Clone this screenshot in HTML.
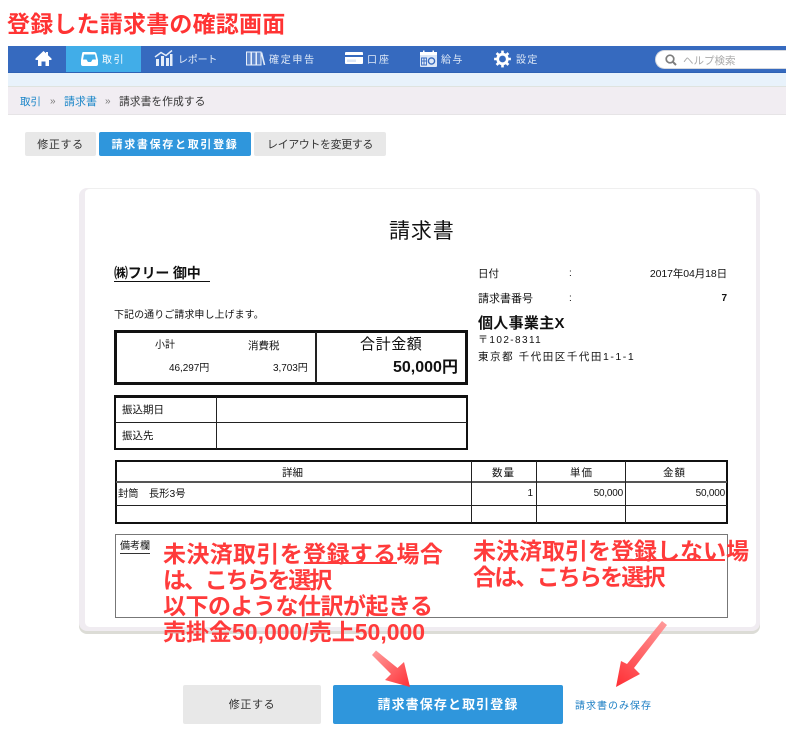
<!DOCTYPE html>
<html lang="ja"><head><meta charset="utf-8"><title>請求書</title>
<style>
html,body{margin:0;padding:0;background:#fff}
body{width:793px;height:748px;position:relative;overflow:hidden;font-family:"Liberation Sans","Noto Sans CJK JP",sans-serif;color:#222}
.a{position:absolute;white-space:nowrap}
.b{position:absolute;box-sizing:border-box}
.nav{color:#dfe9f7;font-size:10px;line-height:14px;letter-spacing:.6px}
.btn{position:absolute;border-radius:2px;text-align:center;box-sizing:border-box}
.red{color:#ff3b3b;font-weight:bold;font-size:23px;line-height:27px}
.k{color:#111}
</style></head><body>

<div class="a" style="left:7px;top:10px;font-size:23px;line-height:28px;font-weight:bold;color:#ff3333;letter-spacing:.2px">登録した請求書の確認画面</div>

<!-- nav -->
<div class="b" style="left:8px;top:46px;width:778px;height:27px;background:#366abf"></div>
<div class="b" style="left:66px;top:46px;width:75px;height:27px;background:#41ade8"></div>
<div class="b" style="left:8px;top:72px;width:778px;height:1px;background:#2f62b4"></div>
<div class="b" style="left:8px;top:73px;width:778px;height:14px;background:#e8f2fb"></div>
<div class="b" style="left:8px;top:86px;width:778px;height:1px;background:#dfe3df"></div>
<div class="b" style="left:8px;top:87px;width:778px;height:28px;background:#f1edf2;border-bottom:1px solid #e6e4e6"></div>

<svg class="a" style="left:0;top:40px" width="793" height="40" viewBox="0 40 793 40">
<!-- home -->
<path d="M43.500 51 L35.500 58.500 V60 H38 V66 H41.500 V61.500 H45.500 V66 H49 V60 H51.500 V58.500 L48 55.200 V52 H46 V53.300 Z" fill="#fff"/>
<!-- inbox -->
<path d="M83 52 H94 Q96 52 96.500 54 L98 60 V64 Q98 66 96 66 H83 Q81 66 81 64 V60 L82 54 Q82.300 52 83 52 Z" fill="#fff"/>
<path d="M84 54.500 H95 L96 59.500 H92.500 L91 62 H88 L86.500 59.500 H83 Z" fill="#41ade8"/>
<!-- report -->
<g fill="#e4edf9"><rect x="156" y="59" width="3" height="7"/><rect x="161" y="56" width="3" height="10"/><rect x="166" y="58" width="3" height="8"/><rect x="170" y="54" width="2.500" height="12"/></g>
<path d="M155 57 L161 52.500 L166 55.500 L172 50.500" fill="none" stroke="#e4edf9" stroke-width="1.500"/>
<!-- books -->
<g fill="#5f88cc" stroke="#e8f0fb" stroke-width="1"><rect x="246.500" y="52" width="4.500" height="13"/><rect x="251.500" y="52" width="4.500" height="13"/><rect x="256.500" y="52" width="4.500" height="13"/></g>
<path d="M261.500 52.500 L264.500 65" stroke="#e4edf9" stroke-width="1.600" fill="none"/>
<!-- card -->
<rect x="345" y="52" width="18" height="12" rx="1" fill="#fff"/>
<rect x="345" y="55" width="18" height="2" fill="#366abf"/><rect x="347" y="59.500" width="9" height="2.500" fill="#dbe6f6"/>
<!-- calendar -->
<rect x="420" y="52" width="17" height="15" rx="1" fill="#dce7f7"/>
<rect x="420" y="52" width="17" height="3" fill="#fff"/>
<rect x="423" y="50.500" width="1.500" height="3" fill="#fff"/><rect x="432.500" y="50.500" width="1.500" height="3" fill="#fff"/>
<path d="M421.500 58 h5 v7 h-5 z M421.500 61 h5 M424 58 v7" stroke="#366abf" fill="none" stroke-width=".9"/>
<circle cx="431.500" cy="61" r="3.100" fill="#dce7f7" stroke="#366abf" stroke-width="1.400"/>
<!-- gear -->
<g fill="#fff"><circle cx="502.500" cy="59" r="6.200"/>
<g stroke="#fff" stroke-width="2.600"><path d="M502.500 50.600 V67.400"/><path d="M494.100 59 H510.900"/><path d="M496.600 53.100 L508.400 64.900"/><path d="M508.400 53.100 L496.600 64.900"/></g></g>
<circle cx="502.500" cy="59" r="3.400" fill="#366abf"/>
</svg>

<div class="a nav" style="left:102px;top:54px;color:#fff;letter-spacing:1.600px">取引</div>
<div class="a nav" style="left:178px;top:54px;letter-spacing:-.2px">レポート</div>
<div class="a nav" style="left:269px;top:54px;letter-spacing:1.700px">確定申告</div>
<div class="a nav" style="left:367px;top:54px;letter-spacing:2px">口座</div>
<div class="a nav" style="left:441px;top:54px;letter-spacing:1.400px">給与</div>
<div class="a nav" style="left:516px;top:54px;letter-spacing:1.400px">設定</div>

<div class="b" style="left:655px;top:50px;width:131px;height:19px;background:#fff;border-radius:10px 0 0 10px;border:1px solid #d5d8de;border-right:0"></div>
<svg class="a" style="left:664px;top:53px" width="14" height="13"><circle cx="6" cy="6" r="3.800" fill="none" stroke="#7d7d7d" stroke-width="1.700"/><path d="M8.800 8.800 L12 12" stroke="#7d7d7d" stroke-width="2"/></svg>
<div class="a" style="left:683px;top:54px;font-size:10.500px;line-height:14px;color:#aaa">ヘルプ検索</div>

<!-- breadcrumb -->
<div class="a" style="left:20px;top:95px;font-size:10.500px;line-height:14px;color:#1c86c8">取引</div>
<div class="a" style="left:50px;top:95px;font-size:10px;line-height:14px;color:#777">»</div>
<div class="a" style="left:64px;top:95px;font-size:11px;line-height:14px;color:#1c86c8">請求書</div>
<div class="a" style="left:105px;top:95px;font-size:10px;line-height:14px;color:#777">»</div>
<div class="a" style="left:119px;top:95px;font-size:10.800px;line-height:14px;color:#333">請求書を作成する</div>

<!-- top buttons -->
<div class="btn" style="left:25px;top:132px;width:71px;height:24px;background:#e8e8e8;color:#333;font-size:11px;line-height:26px;letter-spacing:.6px">修正する</div>
<div class="btn" style="left:99px;top:132px;width:152px;height:24px;background:#2f96dc;color:#fff;font-size:11px;line-height:26px;font-weight:bold;letter-spacing:1.700px">請求書保存と取引登録</div>
<div class="btn" style="left:254px;top:132px;width:132px;height:24px;background:#e8e8e8;color:#333;font-size:11px;line-height:26px;letter-spacing:-.4px">レイアウトを変更する</div>

<!-- card -->
<div class="b" style="left:79px;top:188px;width:681px;height:443px;background:#f0ecf1;border-radius:8px;box-shadow:0 3px 0 #dcdcd6"></div>
<div class="b" style="left:85px;top:188px;width:671px;height:439px;background:#fff;border-top:1px solid #efefef;border-radius:5px"></div>

<div class="a k" style="left:389px;top:219px;font-size:21px;line-height:26px;letter-spacing:.9px">請求書</div>
<div class="a k" style="left:114px;top:265px;font-size:14px;line-height:16px;font-weight:bold;border-bottom:1px solid #111;width:96px;letter-spacing:-.2px">㈱フリー 御中</div>
<div class="a k" style="left:114px;top:309px;font-size:10px;line-height:14px;letter-spacing:.05px">下記の通りご請求申し上げます。</div>

<!-- right info -->
<div class="a k" style="left:478px;top:267px;font-size:10.500px;line-height:14px">日付</div>
<div class="a k" style="left:569px;top:267px;font-size:10px;line-height:14px">:</div>
<div class="a k" style="right:66px;top:267px;font-size:10.500px;line-height:14px;letter-spacing:-.1px">2017年04月18日</div>
<div class="a k" style="left:478px;top:292px;font-size:11px;line-height:14px">請求書番号</div>
<div class="a k" style="left:569px;top:292px;font-size:10px;line-height:14px">:</div>
<div class="a k" style="right:66px;top:292px;font-size:10px;line-height:14px;font-weight:bold">7</div>
<div class="a k" style="left:478px;top:314px;font-size:15px;line-height:19px;font-weight:bold;letter-spacing:.3px">個人事業主X</div>
<div class="a k" style="left:478px;top:334px;font-size:10px;line-height:14px;letter-spacing:1.400px">〒102-8311</div>
<div class="a k" style="left:478px;top:350px;font-size:10.500px;line-height:14px;letter-spacing:1.550px">東京都 千代田区千代田1-1-1</div>

<!-- summary -->
<div class="b" style="left:114px;top:330px;width:354px;height:55px;border:3px solid #111"></div>
<div class="b" style="left:315px;top:332px;width:2px;height:51px;background:#222"></div>
<div class="a k" style="left:155px;top:339px;font-size:10px;line-height:14px">小計</div>
<div class="a k" style="left:248px;top:339px;font-size:10.500px;line-height:14px">消費税</div>
<div class="a k" style="left:169px;top:362px;font-size:10px;line-height:14px;letter-spacing:-.05px">46,297円</div>
<div class="a k" style="left:273px;top:362px;font-size:10px;line-height:14px;letter-spacing:-.05px">3,703円</div>
<div class="a k" style="left:360px;top:335px;font-size:15px;line-height:19px;letter-spacing:.6px">合計金額</div>
<div class="a k" style="left:393px;top:358px;font-size:16px;line-height:20px;font-weight:bold;letter-spacing:0">50,000円</div>

<!-- transfer -->
<div class="b" style="left:114px;top:395px;width:354px;height:55px;border:2px solid #111;border-top-width:3px"></div>
<div class="b" style="left:216px;top:397px;width:1px;height:52px;background:#222"></div>
<div class="b" style="left:115px;top:422px;width:352px;height:1px;background:#222"></div>
<div class="a k" style="left:122px;top:403px;font-size:10.500px;line-height:14px">振込期日</div>
<div class="a k" style="left:122px;top:429px;font-size:10.500px;line-height:14px">振込先</div>

<!-- details -->
<div class="b" style="left:115px;top:460px;width:613px;height:64px;border:2px solid #111"></div>
<div class="b" style="left:116px;top:481px;width:611px;height:2px;background:#555"></div>
<div class="b" style="left:116px;top:505px;width:611px;height:1px;background:#222"></div>
<div class="b" style="left:471px;top:461px;width:1px;height:62px;background:#222"></div>
<div class="b" style="left:536px;top:461px;width:1px;height:62px;background:#222"></div>
<div class="b" style="left:625px;top:461px;width:1px;height:62px;background:#222"></div>
<div class="a k" style="left:282px;top:466px;font-size:10.500px;line-height:14px">詳細</div>
<div class="a k" style="left:492px;top:466px;font-size:10.500px;line-height:14px;letter-spacing:1px">数量</div>
<div class="a k" style="left:570px;top:466px;font-size:10.500px;line-height:14px;letter-spacing:1px">単価</div>
<div class="a k" style="left:663px;top:466px;font-size:10.500px;line-height:14px;letter-spacing:1px">金額</div>
<div class="a k" style="left:118px;top:488px;font-size:10.300px;line-height:14px">封筒　長形3号</div>
<div class="a k" style="right:260px;top:487px;font-size:10px;line-height:14px">1</div>
<div class="a k" style="right:170px;top:487px;font-size:10px;line-height:14px;letter-spacing:-.2px">50,000</div>
<div class="a k" style="right:68px;top:487px;font-size:10px;line-height:14px;letter-spacing:-.2px">50,000</div>

<!-- remarks -->
<div class="b" style="left:115px;top:534px;width:613px;height:84px;border:1px solid #777"></div>
<div class="a k" style="left:120px;top:541px;font-size:10px;line-height:12px;border-bottom:1px solid #333;letter-spacing:0">備考欄</div>

<!-- bottom buttons -->
<div class="btn" style="left:183px;top:685px;width:138px;height:39px;background:#e8e8e8;color:#333;font-size:11px;line-height:40px;letter-spacing:.6px">修正する</div>
<div class="btn" style="left:333px;top:685px;width:230px;height:39px;background:#2f96dc;color:#fff;font-size:13px;line-height:39px;font-weight:bold;letter-spacing:1.100px">請求書保存と取引登録</div>
<div class="a" style="left:575px;top:700px;font-size:10px;line-height:14px;color:#1c7fc4;letter-spacing:1px">請求書のみ保存</div>

<!-- red notes -->
<div class="a red" style="left:163px;top:541px;letter-spacing:.35px">未決済取引を登録する場合</div>
<div class="b" style="left:304px;top:562px;width:93px;height:2px;background:#ff3b3b"></div>
<div class="a red" style="left:163px;top:567px;letter-spacing:-2.100px">は、こちらを選択</div>
<div class="a red" style="left:163px;top:593px;letter-spacing:-.5px">以下のような仕訳が起きる</div>
<div class="a red" style="left:163px;top:619px">売掛金50,000/売上50,000</div>
<div class="a red" style="left:473px;top:538px">未決済取引を登録しない場</div>
<div class="b" style="left:613px;top:559px;width:112px;height:2px;background:#ff3b3b"></div>
<div class="a red" style="left:473px;top:564px;letter-spacing:-1.800px">合は、こちらを選択</div>

<!-- arrows -->
<svg class="a" style="left:0;top:0" width="793" height="748">
<defs>
<linearGradient id="g1" x1="373" y1="652" x2="410" y2="687" gradientUnits="userSpaceOnUse"><stop offset="0" stop-color="#ff9a9a"/><stop offset="1" stop-color="#ff3036"/></linearGradient>
<linearGradient id="g2" x1="665" y1="622" x2="617" y2="686" gradientUnits="userSpaceOnUse"><stop offset="0" stop-color="#ff9a9a"/><stop offset="1" stop-color="#ff3036"/></linearGradient>
</defs>
<path d="M376 650.500 L372 655 L391 674 L385 680 L410 687 L404 662 L397.500 668 Z" fill="url(#g1)"/>
<path d="M662 621 L667 625 L634 668 L640 674 L616 687 L621 661 L627 664 Z" fill="url(#g2)"/>
</svg>
</body></html>
